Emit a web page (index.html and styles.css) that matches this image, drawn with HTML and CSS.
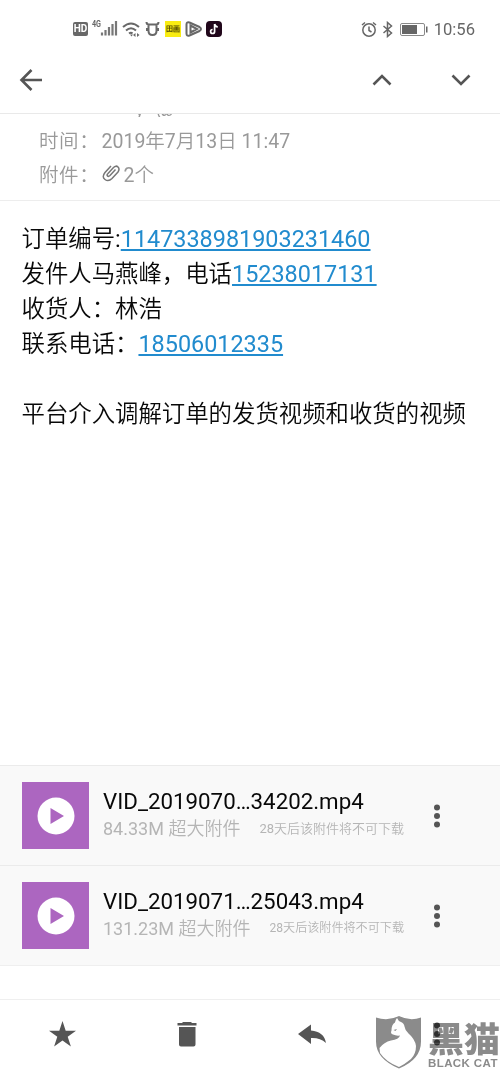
FILE: index.html
```html
<!DOCTYPE html>
<html lang="zh-CN">
  <head>
    <meta charset="UTF-8" />
    <title>邮件</title>
    <link rel="stylesheet" href="styles.css">
  </head>
  <body>
    <div class="statusbar">
      <div class="status-left">
        <span class="hd">HD</span>
        <svg class="signal" width="27" height="20" viewBox="0 0 27 20">
          <text x="0" y="9" font-size="9" font-weight="700" textLength="9" lengthAdjust="spacingAndGlyphs">4G</text>
          <path d="M10 14.500v3M13.500 12v5.500M17 9v8.500M20.500 6v11.500M24 3v14.500" />
        </svg>
        <svg class="wifi" width="19" height="18" viewBox="0 0 19 18">
          <path d="M1 6Q9 -1 17 6M4 9.500Q9 5 14 9.500M7 12.500Q9 11 10.500 12.500" />
          <path class="fill" d="M8 13.500h3l-1.500 2zM11 14l2.500-2v4zM17.500 14l-2.500-2v4z" />
        </svg>
        <svg class="alien" width="15" height="16" viewBox="0 0 15 16">
          <path d="M1.500 1q0 2.500 2.500 2.500h7q2.500 0 2.500-2.500M3.500 4v6q0 4 4 4t4-4V4M2 7v3M13 7v3" />
        </svg>
        <span class="tag">田画</span>
        <svg class="play-badge" width="18" height="16" viewBox="0 0 18 16">
          <path d="M1.500 3.500q0-3 3-2l10 4.500q3 2 0 4l-10 4.500q-3 1-3-2zM5.500 4.500v7l6.500-3.500z" />
        </svg>
        <svg width="16" height="16" viewBox="0 0 16 16">
          <rect width="16" height="16" rx="4" fill="#21071b" />
          <path d="M8.600 3v7.500a2 2 0 1 1-2-2M8.600 3q.5 2.700 3.200 3" fill="none" stroke="#fff" stroke-width="1.700" />
        </svg>
      </div>
      <div class="status-right">
        <svg class="clock" width="17" height="17" viewBox="0 0 17 17">
          <circle cx="8" cy="9" r="6.200" />
          <path d="M8 5.500v4l2.500 1.500M1 4l3-2.500M15 4l-3-2.500" />
        </svg>
        <svg class="bluetooth" width="12" height="17" viewBox="0 0 12 17">
          <path d="M1.500 5l8 7-4 3.500v-14l4 3.500-8 7" />
        </svg>
        <svg class="battery" width="28" height="15" viewBox="0 0 28 15">
          <rect x=".5" y="1.500" width="24" height="12" rx="1.500" fill="none" stroke="#8a8a8a" />
          <path d="M2 3h15v9h-15zM26 4.500h1.500v6h-1.500z" fill="#666" />
        </svg>
        <span class="time">10:56</span>
      </div>
    </div>

    <div class="toolbar">
      <svg width="24" height="24" viewBox="0 0 24 24"><path d="M23 12H3M12.500 2L2.500 12l10 10" /></svg>
      <div class="toolbar-nav">
        <svg width="20" height="14" viewBox="0 0 20 14"><path d="M1.500 11.500L10 3l8.500 8.500" /></svg>
        <svg width="20" height="14" viewBox="0 0 20 14"><path d="M1.500 2.500L10 11l8.500-8.500" /></svg>
      </div>
    </div>

    <div class="meta">
      <div class="meta-sender"><span>y</span><span>@</span></div>
      <div class="meta-row"><span class="label">时间：</span><span>2019年7月13日 11:47</span></div>
      <div class="meta-row">
        <span class="label">附件：</span>
        <svg class="clip" width="19" height="18" viewBox="0 0 19 18">
          <path d="M13.500 5.500L8 11.500q-1.500 1.500-2.500.5t.5-2.500L11.500 3.500q2.500-2.500 4.500-.5t0 5L10 14.500q-3.500 3.500-7 1t0-7L9 2" />
        </svg>
        <span>2个</span>
      </div>
    </div>

    <div class="content">
      <p>订单编号:<a href="#">1147338981903231460</a></p>
      <p>发件人马燕峰，电话<a href="#">15238017131</a></p>
      <p>收货人：林浩</p>
      <p>联系电话：<a href="#">18506012335</a></p>
      <p><br></p>
      <p>平台介入调解订单的发货视频和收货的视频</p>
    </div>

    <div class="attachments">
      <div class="attachment">
        <div class="thumb">
          <svg width="38" height="38" viewBox="0 0 38 38"><circle cx="19" cy="19" r="18.500" fill="#fff" /><path d="M13.500 11v16L27 19z" fill="#ac66c0" /></svg>
        </div>
        <div class="info">
          <div class="name">VID_2019070…34202.mp4</div>
          <div class="detail"><span>84.33M 超大附件</span><span class="expire">28天后该附件将不可下载</span></div>
        </div>
        <svg class="more" width="8" height="24" viewBox="0 0 8 24"><circle cx="4" cy="3.500" r="3" /><circle cx="4" cy="12" r="3" /><circle cx="4" cy="20.500" r="3" /></svg>
      </div>
      <div class="attachment">
        <div class="thumb">
          <svg width="38" height="38" viewBox="0 0 38 38"><circle cx="19" cy="19" r="18.500" fill="#fff" /><path d="M13.500 11v16L27 19z" fill="#ac66c0" /></svg>
        </div>
        <div class="info">
          <div class="name">VID_2019071…25043.mp4</div>
          <div class="detail"><span>131.23M 超大附件</span><span class="expire expire-small">28天后该附件将不可下载</span></div>
        </div>
        <svg class="more" width="8" height="24" viewBox="0 0 8 24"><circle cx="4" cy="3.500" r="3" /><circle cx="4" cy="12" r="3" /><circle cx="4" cy="20.500" r="3" /></svg>
      </div>
    </div>

    <div class="actions">
      <svg width="28" height="28" viewBox="0 0 28 28"><path d="M14.500 1l3.200 9.800H28l-8.300 6 3.200 9.800-8.400-6-8.400 6 3.200-9.800-8.300-6h10.300z" /></svg>
      <svg width="28" height="28" viewBox="0 0 28 28"><path d="M4.500 3h5V2h9v1h5v2.500h-19zM6 7h16.500v17.500q0 2-2 2H8q-2 0-2-2z" /></svg>
      <svg width="28" height="28" viewBox="0 0 28 28"><path d="M0 14L13 4.500v6q13 1 15 12.500-6-5.500-15-5v6z" /></svg>
      <svg width="28" height="28" viewBox="0 0 28 28"><circle cx="14" cy="5.500" r="3" /><circle cx="14" cy="14" r="3" /><circle cx="14" cy="22.500" r="3" /></svg>
    </div>

    <div class="watermark">
      <svg width="46" height="54" viewBox="0 0 46 54">
        <path fill="#8b8b8b" d="M0 1.500q12 4 23-1.500 11 5.500 22 1.500v24q0 18-22 27Q0 43 0 25.500z" />
        <path fill="#fff" d="M21 2q1.500 3.500 4 4 3 1 3.500 4.500.5 4 4 7Q39 23 40 30q0 8-5 13-6 5-12 8Q10 46 4 37l-.5-5Q8 26 15 24.500q8-1 9-5-4 .5-7-1-3-1-1.500-4 0-6 3.500-8 .5-3 2-4.500z" />
        <path fill="#8b8b8b" d="M17.500 14l3.500-1-1.500 2z" />
      </svg>
      <div class="brand">
        <span class="brand-cn">黑猫</span>
        <span class="brand-en">BLACK CAT</span>
      </div>
    </div>
  </body>
</html>
```
FILE: styles.css
```css
* {
  box-sizing: border-box;
  margin: 0;
  padding: 0;
}

body {
  position: relative;
  display: flex;
  flex-direction: column;
  width: 500px;
  height: 1069px;
  overflow: hidden;
  font-family: Roboto, "Noto Sans CJK SC DemiLight", "Noto Sans CJK SC", sans-serif;
  color: #080808;
  background-color: #fff;
}

svg {
  display: block;
  flex: none;
}

.statusbar {
  display: flex;
  align-items: center;
  justify-content: space-between;
  height: 58px;
  padding: 0 25px 0 73px;
}

.status-left,
.status-right {
  display: flex;
  align-items: center;
}

.hd {
  width: 15px;
  height: 14px;
  border-radius: 2px;
  font-size: 10px;
  font-weight: 700;
  line-height: 14px;
  text-align: center;
  color: #fff;
  background-color: #686868;
}

.signal {
  margin: -2px 0 0 4px;
  fill: #666;
  stroke: none;
}

.signal path {
  stroke: #777;
  stroke-width: 2.2;
}

.wifi,
.alien,
.play-badge {
  fill: none;
  stroke: #686868;
  stroke-width: 2;
}

.wifi {
  margin: 2px 0 0 3px;
}

.wifi .fill {
  fill: #686868;
  stroke: none;
}

.alien {
  margin-left: 4px;
}

.tag {
  width: 16px;
  height: 16px;
  margin-left: 5px;
  font-size: 7px;
  font-weight: 700;
  line-height: 16px;
  text-align: center;
  color: #4a4300;
  background-color: #f9ec12;
}

.play-badge {
  margin: 0 3px 0 4px;
}

.clock,
.bluetooth {
  fill: none;
  stroke: #666;
  stroke-width: 1.5;
}

.bluetooth {
  margin: 0 6px 0 4px;
}

.time {
  margin-left: 6px;
  font-size: 16.6px;
  color: #666;
}

.toolbar {
  display: flex;
  align-items: center;
  justify-content: space-between;
  height: 56px;
  padding: 0 29px 11px 19px;
  border-bottom: 1px solid #e9e9e9;
  fill: none;
  stroke: #555;
  stroke-width: 2.6;
}

.toolbar-nav {
  display: flex;
  gap: 59px;
}

.meta {
  height: 87px;
  padding-left: 39px;
  border-bottom: 1px solid #ededed;
  font-size: 19.5px;
  color: #999;
}

.meta-sender {
  display: flex;
  align-items: flex-end;
  gap: 12px;
  height: 3px;
  margin-bottom: 5px;
  padding-left: 96px;
  overflow: hidden;
  line-height: 14px;
}

.meta-row {
  display: flex;
  align-items: center;
  height: 34.5px;
}

.label {
  width: 62.5px;
  letter-spacing: 0.6px;
  white-space: nowrap;
}

.clip {
  margin: -1px 3px 0 0;
  fill: none;
  stroke: #777;
  stroke-width: 1.5;
}

.content {
  flex: 1;
  padding: 21px 21.5px 0;
  font-size: 23.4px;
  line-height: 35.1px;
}

.content p {
  height: 35.1px;
  white-space: nowrap;
}

.content a {
  color: #218bce;
  text-decoration: underline;
  text-decoration-thickness: 2px;
  text-underline-offset: 2px;
}

.attachment {
  display: flex;
  align-items: center;
  height: 100px;
  padding: 0 59px 0 22px;
  border-top: 1px solid #ebebeb;
  background-color: #f9f9f9;
}

.attachments {
  border-bottom: 1px solid #efefef;
}

.thumb {
  display: flex;
  align-items: center;
  justify-content: center;
  width: 67px;
  height: 67px;
  background-color: #ac66c0;
}

.info {
  width: 301px;
  margin: -3px 0 0 14px;
}

.name {
  font-size: 22.3px;
  line-height: 28px;
}

.detail {
  display: flex;
  align-items: center;
  justify-content: space-between;
  font-size: 18px;
  line-height: 27px;
  color: #b5b5b5;
}

.expire {
  font-size: 13px;
}

.expire-small {
  font-size: 12.1px;
}

.more {
  margin-left: auto;
  fill: #555;
}

.actions {
  display: flex;
  justify-content: space-between;
  height: 70px;
  margin-top: 33px;
  padding: 20px 49px 0 48px;
  border-top: 1px solid #efefef;
  fill: #555;
}

/* 右下角品牌水印 */
.watermark {
  position: absolute;
  right: 0;
  bottom: -1px;
  display: flex;
  gap: 6px;
  width: 124px;
  mix-blend-mode: multiply;
}

.brand {
  display: flex;
  flex-direction: column;
  width: 72px;
  color: #8b8b8b;
  white-space: nowrap;
}

.brand-cn {
  font-size: 36px;
  font-weight: 900;
  line-height: 42px;
  font-family: "Noto Sans CJK SC", sans-serif;
  transform: scaleY(0.95);
}

.brand-en {
  font-family: "Liberation Sans", sans-serif;
  font-size: 11.5px;
  font-weight: 700;
  line-height: 11px;
  letter-spacing: 0.4px;
}
```
